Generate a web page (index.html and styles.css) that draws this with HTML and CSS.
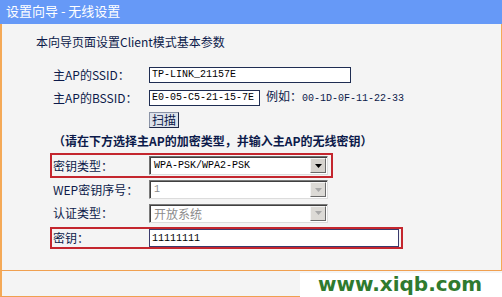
FILE: index.html
```html
<!DOCTYPE html>
<html lang="zh-CN">
<head>
  <meta charset="UTF-8">
  <title>设置向导 - 无线设置</title>
  <link rel="stylesheet" href="styles.css">
</head>
<body>
  <div class="page">
    <div class="head">设置向导 - 无线设置</div>

    <div class="main">
      <p class="intro">本向导页面设置Client模式基本参数</p>

      <div class="form">
        <div class="row">
          <span class="label">主AP的SSID：</span>
          <input class="text ssid" value="TP-LINK_21157E">
        </div>
        <div class="row">
          <span class="label">主AP的BSSID：</span>
          <input class="text mac" value="E0-05-C5-21-15-7E">
          <span class="hint">例如：<span class="mono">00-1D-0F-11-22-33</span></span>
        </div>
        <div class="row row-btn">
          <span class="label"></span>
          <button class="btn">扫描</button>
        </div>

        <p class="note">（请在下方选择主AP的加密类型，并输入主AP的无线密钥）</p>

        <div class="row boxed box-type">
          <span class="label">密钥类型：</span>
          <div class="select">
            <span class="value">WPA-PSK/WPA2-PSK</span>
            <span class="arrow"><svg width="7" height="4" viewBox="0 0 7 4"><polygon points="0,0 7,0 3.5,4" fill="#000"/></svg></span>
          </div>
        </div>
        <div class="row row-wep">
          <span class="label">WEP密钥序号：</span>
          <div class="select disabled">
            <span class="value">1</span>
            <span class="arrow"><svg width="7" height="4" viewBox="0 0 7 4"><polygon points="0,0 7,0 3.5,4" fill="#a8a8a8"/></svg></span>
          </div>
        </div>
        <div class="row row-auth">
          <span class="label">认证类型：</span>
          <div class="select disabled">
            <span class="value cjk">开放系统</span>
            <span class="arrow"><svg width="7" height="4" viewBox="0 0 7 4"><polygon points="0,0 7,0 3.5,4" fill="#a8a8a8"/></svg></span>
          </div>
        </div>
        <div class="row boxed box-key">
          <span class="label">密钥：</span>
          <input class="text key" value="11111111">
        </div>
      </div>
    </div>

    <div class="foot">
      <span class="site">www.xiqb.com</span>
    </div>
  </div>
</body>
</html>
```

FILE: styles.css
```css
* {
  box-sizing: border-box;
}
body {
  margin: 0;
  background: #fff;
  font-family: "Noto Sans CJK SC", sans-serif;
  font-size: 12px;
  color: #0c1a4a;
}
.page {
  width: 502px;
  height: 297px;
}
.head {
  height: 24px;
  padding-left: 6px;
  background: #6699f7;
  color: #fff;
  font-size: 13px;
  line-height: 22px;
}
.main {
  height: 247px;
  padding: 10px 0 0 34px;
  background: #f4f4f4;
  border-left: 2px solid #f4a957;
  border-right: 1px solid #f4a957;
  border-bottom: 1px solid #f0a050;
}
.intro {
  margin: 0 0 13px;
  line-height: 16px;
}
.form {
  margin-left: 17px;
}
.row {
  display: flex;
  align-items: center;
  height: 23px;
}
.label {
  flex: none;
  width: 96px;
  line-height: 16px;
  white-space: nowrap;
}
.mono,
.text,
.select .value {
  font-family: "Liberation Mono", monospace;
  font-size: 10px;
}
.text {
  height: 16px;
  padding: 0 2px;
  margin: 0;
  border: 1px solid #1f2d52;
  background: #fff;
  color: #000;
  outline: none;
}
.ssid {
  width: 202px;
}
.mac {
  width: 111px;
}
.hint {
  margin-left: 6px;
  line-height: 16px;
}
.row-btn {
  height: 22px;
}
.btn {
  width: 30px;
  height: 16px;
  padding: 0;
  font-family: "Noto Sans CJK SC", sans-serif;
  font-size: 12px;
  line-height: 14px;
  color: #0c1a4a;
  background: #dde2ea;
  border: 1px solid;
  border-color: #8a93a6 #1d2747 #1d2747 #8a93a6;
}
.note {
  margin: 0;
  height: 20px;
  line-height: 20px;
  font-weight: bold;
  white-space: nowrap;
}
.boxed {
  margin-left: -3px;
  padding-left: 1px;
  border: 2px solid #c4262e;
}
.box-type {
  width: 283px;
  height: 25px;
  margin-top: 2px;
}
.box-key {
  width: 353px;
  height: 22px;
  margin-top: 2px;
}
.row-auth {
  height: 24px;
}
.select {
  display: flex;
  width: 179px;
  height: 19px;
  background: #fff;
  border: 1px solid;
  border-color: #6e6e6e #dcdcdc #dcdcdc #6e6e6e;
  box-shadow: inset 1px 1px 0 #404040;
}
.select .value {
  flex: 1;
  padding-left: 4px;
  line-height: 17px;
  color: #000;
}
.select .value.cjk {
  font-family: "Noto Sans CJK SC", sans-serif;
  font-size: 12px;
}
.select .arrow {
  display: flex;
  align-items: center;
  justify-content: center;
  width: 16px;
  margin: 1px 1px 1px 0;
  background: #d6d3ce;
  border: 1px solid;
  border-color: #f4f4f4 #6a6a6a #6a6a6a #f4f4f4;
}
.select.disabled {
  border-color: #7a7a7a #dcdcdc #dcdcdc #7a7a7a;
}
.select.disabled .value {
  color: #8c8c8c;
}
.select.disabled .arrow {
  background: #dcdad6;
}
.key {
  width: 250px;
  height: 18px;
  border-color: #3a3a6c;
}
.foot {
  position: relative;
  height: 26px;
  background: #f4f4f4;
  border-left: 2px solid #f4a957;
  border-bottom: 1px solid #f0a050;
}
/* watermark laid over the screenshot */
.site {
  position: absolute;
  right: 0;
  bottom: -1px;
  width: 202px;
  height: 24px;
  padding-left: 18px;
  background: #fff;
  font-family: "DejaVu Sans", sans-serif;
  font-weight: bold;
  font-size: 20px;
  line-height: 22px;
  color: #2f7a2e;
}
```
